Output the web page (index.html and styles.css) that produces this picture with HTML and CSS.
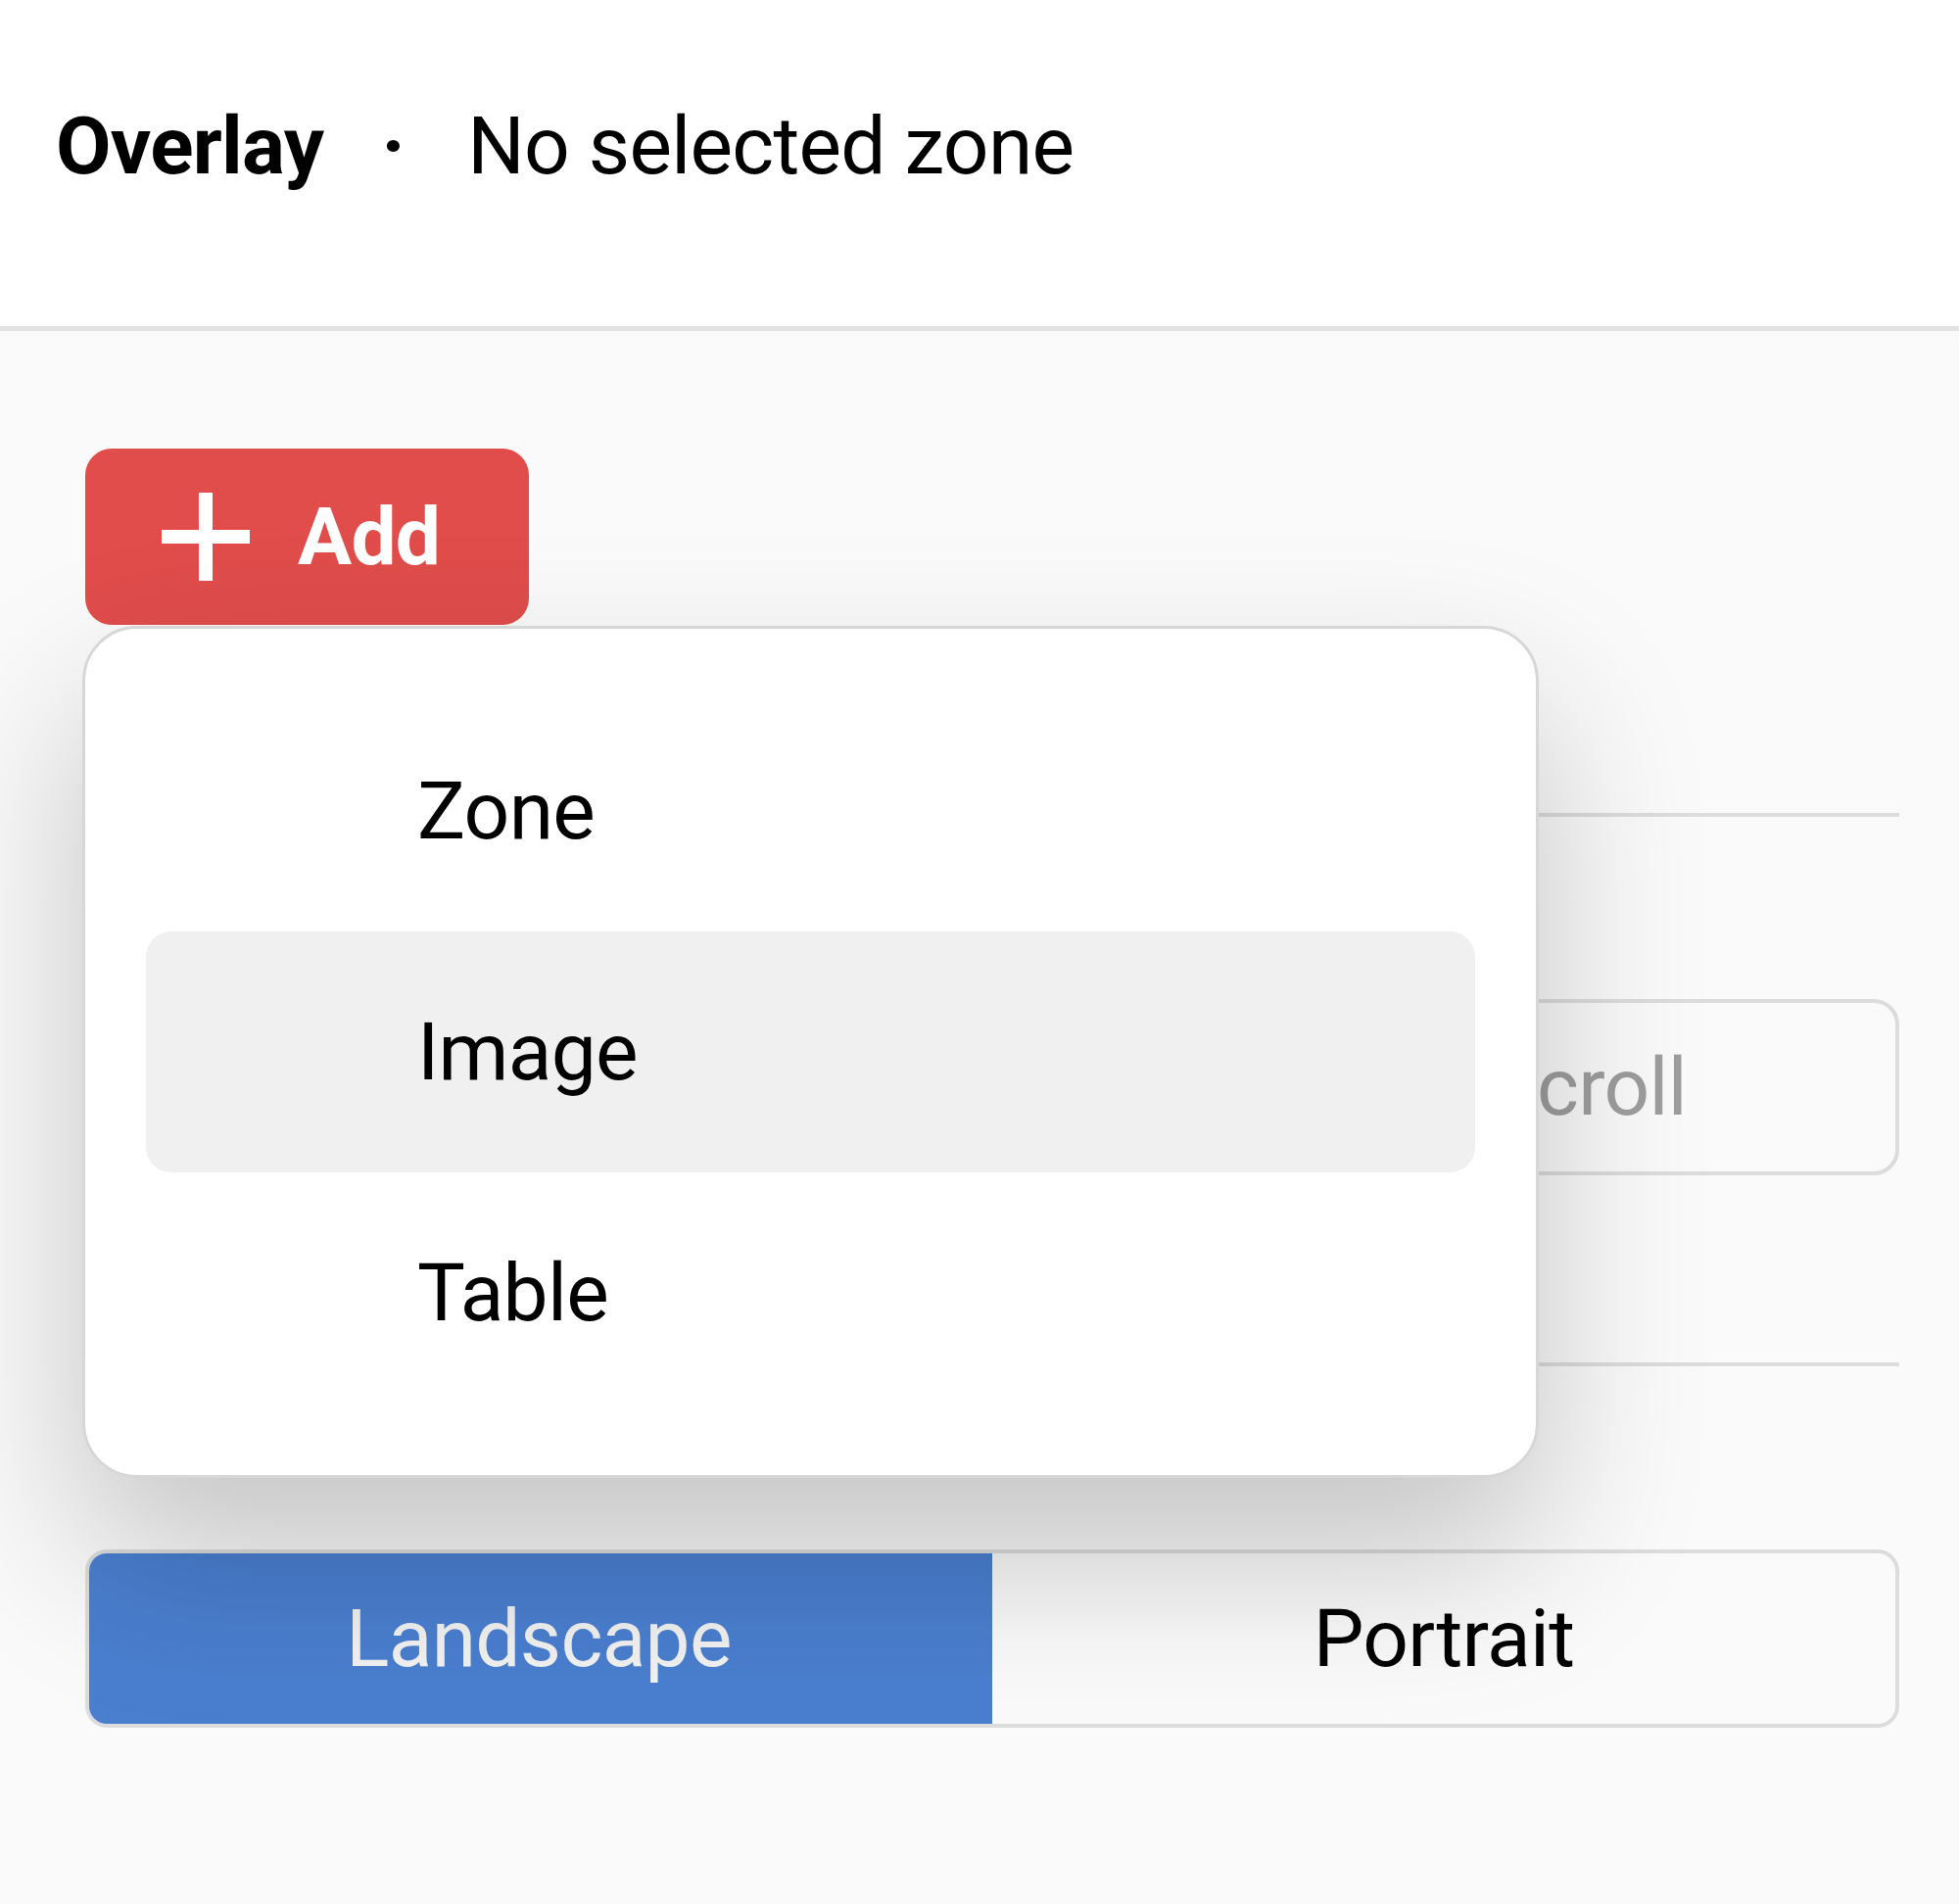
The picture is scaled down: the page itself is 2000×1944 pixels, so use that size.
FILE: index.html
```html
<!DOCTYPE html>
<html lang="en">
<head>
<meta charset="utf-8">
<title>Overlay</title>
<link rel="stylesheet" href="styles.css">
</head>
<body>
  <header class="topbar">
    <span class="title">Overlay</span>
    <span class="sep">·</span>
    <span class="subtitle">No selected zone</span>
  </header>

  <main class="content">
    <div class="add-menu">
      <button class="add-btn" type="button">
        <svg class="plus" viewBox="0 0 90 90" aria-hidden="true">
          <path d="M45 0V90M0 45H90" stroke="#ffffff" stroke-width="14" fill="none"/>
        </svg>
        <span>Add</span>
      </button>
      <div class="dropdown" role="menu">
        <div class="item" role="menuitem">Zone</div>
        <div class="item item-hover" role="menuitem">Image</div>
        <div class="item" role="menuitem">Table</div>
      </div>
    </div>

    <hr class="divider divider-first">

    <div class="field">
      <span class="field-label">Behavior</span>
      <div class="select">Scroll</div>
    </div>

    <hr class="divider divider-second">

    <div class="segmented">
      <div class="seg seg-active">Landscape</div>
      <div class="seg">Portrait</div>
    </div>
  </main>
</body>
</html>
```

FILE: styles.css
```css
html, body {
  margin: 0;
  padding: 0;
}

body {
  width: 2000px;
  min-height: 1944px;
  background: #fafafa;
  font-family: Roboto, "Liberation Sans", Arial, sans-serif;
  font-size: 82px;
  letter-spacing: -0.7px;
  color: #000;
  overflow: hidden;
}

.topbar {
  box-sizing: border-box;
  height: 338px;
  background: #ffffff;
  border-bottom: 5px solid #e2e2e2;
  display: flex;
  align-items: flex-start;
  padding: 101px 0 0 57px;
}

.title {
  font-weight: 700;
}

.sep {
  font-weight: 700;
  margin: 0 64px 0 59px;
}

.subtitle {
  font-weight: 400;
}

.content {
  display: flex;
  flex-direction: column;
  padding: 120px 61px 0 87px;
}

.add-menu {
  position: relative;
  align-self: flex-start;
}

.add-btn {
  box-sizing: border-box;
  height: 180px;
  width: 453px;
  display: flex;
  align-items: center;
  gap: 49px;
  padding: 0 0 0 78px;
  border: none;
  border-radius: 27px;
  background: #e04d4b;
  color: #ffffff;
  font-family: inherit;
  font-size: 82px;
  letter-spacing: -0.7px;
  font-weight: 700;
  cursor: pointer;
}

.plus {
  width: 90px;
  height: 90px;
  flex: none;
}

.dropdown {
  position: absolute;
  top: 181px;
  left: -3px;
  z-index: 10;
  box-sizing: border-box;
  width: 1487px;
  padding: 63px 62px;
  background: #ffffff;
  border: 3px solid #d7d7d7;
  border-radius: 56px;
  box-shadow: 0 80px 170px rgba(0, 0, 0, 0.22);
  display: flex;
  flex-direction: column;
}

.item {
  box-sizing: border-box;
  height: 246px;
  display: flex;
  align-items: center;
  padding-left: 277px;
  border-radius: 26px;
}

.item-hover {
  background: #f0f0f0;
}

.divider {
  border: none;
  height: 4px;
  background: #dcdcdc;
  margin: 0;
}

.divider-first {
  margin-top: 192px;
}

.divider-second {
  margin-top: 191px;
}

.field {
  display: flex;
  align-items: center;
  margin-top: 186px;
  height: 180px;
}

.field-label {
  flex: 1;
  color: #000;
}

.select {
  box-sizing: border-box;
  width: 460px;
  height: 180px;
  display: flex;
  align-items: center;
  padding-left: 38px;
  border: 4px solid #dcdcdc;
  border-radius: 26px;
  color: #9e9e9e;
}

.segmented {
  margin-top: 187px;
  box-sizing: border-box;
  height: 182px;
  display: grid;
  grid-template-columns: 1fr 1fr;
  border: 4px solid #dcdcdc;
  border-radius: 22px;
  overflow: hidden;
}

.seg {
  display: flex;
  align-items: center;
  justify-content: center;
  color: #000;
}

.seg-active {
  background: #4a7fd0;
  color: #f2f2f2;
  margin: -4px 0 -4px -4px;
}
```
